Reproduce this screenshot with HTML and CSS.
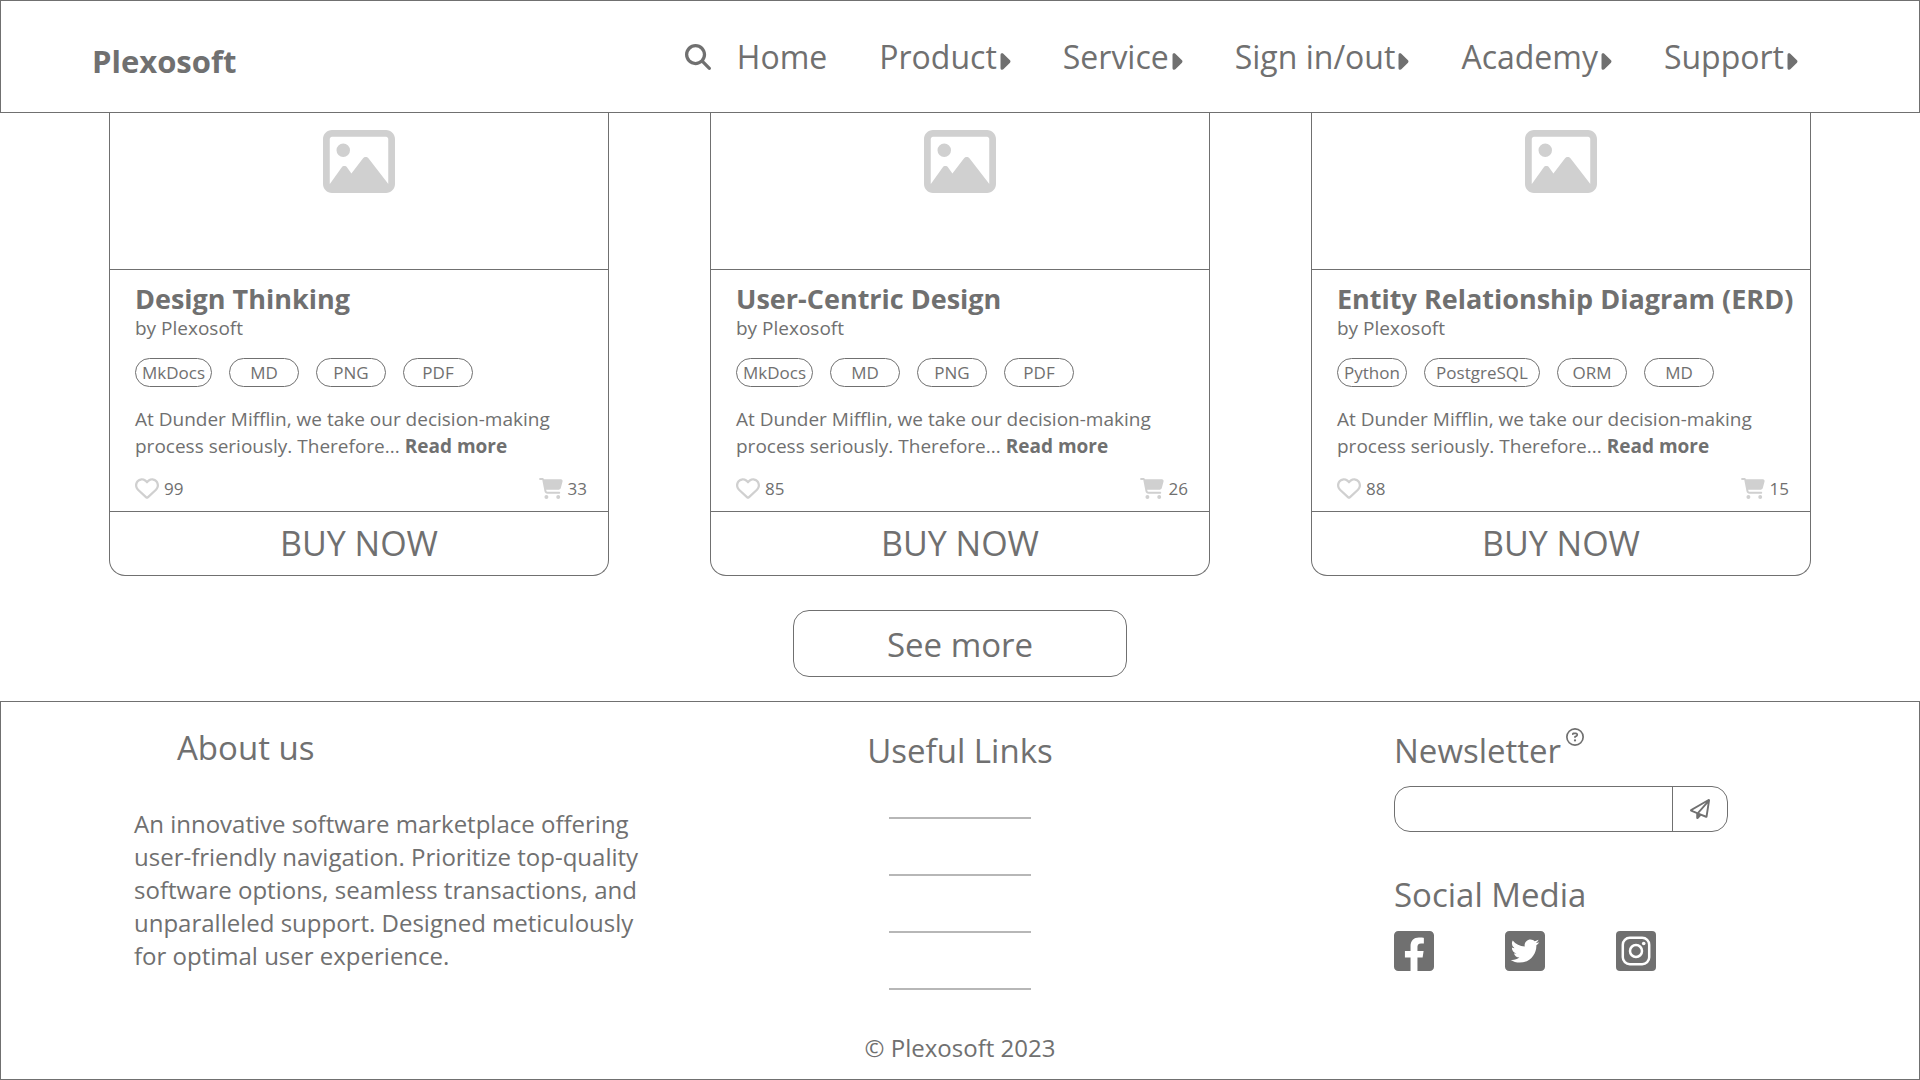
FILE: index.html
```html
<!DOCTYPE html>
<html lang="en">
<head>
<meta charset="utf-8">
<meta name="viewport" content="width=device-width, initial-scale=1">
<title>Plexosoft</title>
<link rel="stylesheet" href="styles.css">
</head>
<body>
<svg class="sprite" aria-hidden="true">
  <symbol id="image" viewBox="0 32 512 448"><path d="M448 80c8.800 0 16 7.200 16 16V415.800l-5-6.500-136-176c-4.500-5.900-11.600-9.300-19-9.300s-14.400 3.400-19 9.300L202 340.700l-30.500-42.700C167 291.700 159.800 288 152 288s-15 3.700-19.500 10.100l-80 112L48 416.300l0-.3V96c0-8.800 7.200-16 16-16H448zM64 32C28.700 32 0 60.700 0 96V416c0 35.300 28.700 64 64 64H448c35.300 0 64-28.700 64-64V96c0-35.300-28.700-64-64-64H64zm80 192a48 48 0 1 0 0-96 48 48 0 1 0 0 96z"/></symbol>
  <symbol id="heart" viewBox="0 36 512 448"><path d="M225.800 468.200l-2.500-2.300L48.100 303.200C17.400 274.700 0 234.700 0 192.800v-3.300c0-70.400 50-130.800 119.200-144C158.600 37.900 198.900 47 231 69.600c9 6.400 17.400 13.800 25 22.300c4.200-4.800 8.700-9.200 13.500-13.300c3.700-3.200 7.500-6.200 11.500-9C313.100 47 353.400 37.900 392.800 45.400C462 58.600 512 119.100 512 189.500v3.300c0 41.900-17.400 81.900-48.100 110.400L288.700 465.900l-2.500 2.300c-8.200 7.600-19 11.900-30.200 11.900s-22-4.200-30.200-11.900zM239.100 145c-.4-.3-.7-.7-1-1.100l-17.800-20c-23.100-25.900-58-37.700-92-31.200C81.600 101.500 48 142.100 48 189.500v3.300c0 28.500 11.900 55.800 32.800 75.200L256 430.700 431.200 268c20.900-19.400 32.800-46.700 32.800-75.200v-3.300c0-47.300-33.600-88-80.100-96.900c-34-6.500-69 5.400-92 31.200l-18 20.200c-.3 .4-.7 .7-1 1.100c-4.500 4.500-10.600 7-16.900 7s-12.400-2.500-16.900-7z"/></symbol>
  <symbol id="cart" viewBox="0 0 576 512"><path d="M0 24C0 10.700 10.700 0 24 0H69.500c22 0 41.500 12.800 50.600 32h411c26.300 0 45.500 25 38.600 50.400l-41 152.300c-8.500 31.400-37 53.300-69.500 53.300H170.700l5.400 28.500c2.200 11.300 12.100 19.500 23.600 19.500H488c13.300 0 24 10.700 24 24s-10.700 24-24 24H199.700c-34.600 0-64.300-24.600-70.700-58.500L77.400 54.500c-.7-3.800-4-6.500-7.900-6.500H24C10.700 48 0 37.300 0 24zM128 464a48 48 0 1 1 96 0 48 48 0 1 1 -96 0zm336-48a48 48 0 1 1 0 96 48 48 0 1 1 0-96z"/></symbol>
  <symbol id="search" viewBox="0 0 512 512"><path d="M416 208c0 45.900-14.900 88.300-40 122.700L502.600 457.400c12.500 12.500 12.500 32.800 0 45.300s-32.800 12.500-45.300 0L330.700 376c-34.400 25.200-76.800 40-122.700 40C93.100 416 0 322.900 0 208S93.100 0 208 0S416 93.100 416 208zM208 352a144 144 0 1 0 0-288 144 144 0 1 0 0 288z"/></symbol>
  <symbol id="caret" viewBox="64 92 192 328"><path d="M246.600 278.600c12.500-12.500 12.500-32.800 0-45.300l-128-128c-9.200-9.200-22.900-11.900-34.900-6.900s-19.800 16.600-19.800 29.600l0 256c0 12.900 7.800 24.600 19.800 29.600s25.700 2.200 34.900-6.900l128-128z"/></symbol>
  <symbol id="question" viewBox="0 0 512 512"><path d="M464 256A208 208 0 1 0 48 256a208 208 0 1 0 416 0zM0 256a256 256 0 1 1 512 0A256 256 0 1 1 0 256zm169.800-90.700c7.900-22.300 29.100-37.300 52.800-37.300h58.300c34.900 0 63.100 28.300 63.100 63.100c0 22.600-12.100 43.500-31.700 54.800L280 264.400c-.2 13-10.900 23.600-24 23.600c-13.300 0-24-10.700-24-24V250.500c0-8.600 4.600-16.500 12.100-20.800l44.300-25.400c4.700-2.700 7.600-7.700 7.600-13.100c0-8.400-6.800-15.100-15.100-15.100H222.600c-3.400 0-6.400 2.100-7.500 5.300l-.4 1.200c-4.400 12.500-18.200 19-30.600 14.600s-19-18.200-14.600-30.600l.4-1.200zM224 352a32 32 0 1 1 64 0 32 32 0 1 1 -64 0z"/></symbol>
  <symbol id="plane" viewBox="0 0 512 512"><path d="M16.100 260.200c-22.600 12.900-20.500 47.300 3.600 57.300L160 376V479.300c0 18.100 14.600 32.700 32.700 32.700c9.700 0 18.900-4.300 25.100-11.800l62-74.300 123.900 51.600c18.900 7.900 40.800-4.500 43.900-24.700l64-416c1.900-12.100-3.400-24.300-13.500-31.200s-23.300-7.500-34-1.400l-448 256zm52.100 25.500L409.700 90.600 190.100 336l1.200 1L68.200 285.700zM403.300 425.400L236.700 355.900 450.800 116.600 403.300 425.400z"/></symbol>
  <symbol id="facebook" viewBox="0 32 448 448"><path d="M400 32H48A48 48 0 0 0 0 80v352a48 48 0 0 0 48 48h137.250V327.690h-63V256h63v-54.640c0-62.150 37-96.480 93.670-96.480 27.140 0 55.520 4.840 55.520 4.840v61h-31.270c-30.810 0-40.420 19.120-40.420 38.730V256h68.780l-11 71.690h-57.780V480H400a48 48 0 0 0 48-48V80a48 48 0 0 0-48-48z"/></symbol>
  <symbol id="twitter" viewBox="0 32 448 448"><path d="M400 32H48C21.500 32 0 53.500 0 80v352c0 26.500 21.500 48 48 48h352c26.500 0 48-21.500 48-48V80c0-26.500-21.500-48-48-48zm-48.900 158.800c.2 2.800.2 5.700.2 8.500 0 86.700-66 186.600-186.600 186.600-37.200 0-71.700-10.800-100.700-29.400 5.300.6 10.400.8 15.800.8 30.700 0 58.900-10.400 81.400-28-28.800-.6-53-19.500-61.300-45.500 10.100 1.500 19.200 1.500 29.600-1.200-30-6.100-52.500-32.500-52.500-64.400v-.8c8.700 4.900 18.900 7.900 29.600 8.300a65.447 65.447 0 0 1-29.200-54.600c0-12.200 3.200-23.400 8.900-33.100 32.300 39.800 80.800 65.800 135.200 68.600-9.300-44.500 24-80.600 64-80.600 18.900 0 35.900 7.900 47.900 20.700 14.800-2.800 29-8.300 41.600-15.800-4.900 15.200-15.200 28-28.800 36.100 13.200-1.400 26-5.100 37.800-10.200-8.900 13.100-20.100 24.700-32.900 34z"/></symbol>
  <symbol id="instagram" viewBox="0 0 40 40"><rect width="40" height="40" rx="4"/><g fill="none" stroke="#fff" stroke-width="2.500"><rect x="6.800" y="6.800" width="26.400" height="26.400" rx="7"/><circle cx="20" cy="20" r="6"/></g><circle cx="27.700" cy="12.500" r="1.800" fill="#fff"/></symbol>
</svg>

<header class="header">
  <a class="logo" href="#">Plexosoft</a>
  <div class="header-tools">
    <button class="icon-button" type="button" aria-label="Search"><svg class="icon-search"><use href="#search"/></svg></button>
    <nav class="nav">
      <a href="#">Home</a>
      <a href="#">Product<svg class="icon-caret"><use href="#caret"/></svg></a>
      <a href="#">Service<svg class="icon-caret"><use href="#caret"/></svg></a>
      <a href="#">Sign in/out<svg class="icon-caret"><use href="#caret"/></svg></a>
      <a href="#">Academy<svg class="icon-caret"><use href="#caret"/></svg></a>
      <a href="#">Support<svg class="icon-caret"><use href="#caret"/></svg></a>
    </nav>
  </div>
</header>

<main class="main">
  <div class="cards">
    <article class="card">
      <div class="card-media"><svg class="icon-image"><use href="#image"/></svg></div>
      <div class="card-body">
        <h2 class="card-title">Design Thinking</h2>
        <p class="card-author">by Plexosoft</p>
        <ul class="tags"><li>MkDocs</li><li>MD</li><li>PNG</li><li>PDF</li></ul>
        <p class="card-text">At Dunder Mifflin, we take our decision-making process seriously. Therefore... <a href="#">Read more</a></p>
        <div class="stats">
          <span class="stat"><svg class="icon-stat"><use href="#heart"/></svg>99</span>
          <span class="stat"><svg class="icon-stat"><use href="#cart"/></svg>33</span>
        </div>
      </div>
      <button class="buy" type="button">BUY NOW</button>
    </article>
    <article class="card">
      <div class="card-media"><svg class="icon-image"><use href="#image"/></svg></div>
      <div class="card-body">
        <h2 class="card-title">User-Centric Design</h2>
        <p class="card-author">by Plexosoft</p>
        <ul class="tags"><li>MkDocs</li><li>MD</li><li>PNG</li><li>PDF</li></ul>
        <p class="card-text">At Dunder Mifflin, we take our decision-making process seriously. Therefore... <a href="#">Read more</a></p>
        <div class="stats">
          <span class="stat"><svg class="icon-stat"><use href="#heart"/></svg>85</span>
          <span class="stat"><svg class="icon-stat"><use href="#cart"/></svg>26</span>
        </div>
      </div>
      <button class="buy" type="button">BUY NOW</button>
    </article>
    <article class="card">
      <div class="card-media"><svg class="icon-image"><use href="#image"/></svg></div>
      <div class="card-body">
        <h2 class="card-title">Entity Relationship Diagram (ERD)</h2>
        <p class="card-author">by Plexosoft</p>
        <ul class="tags"><li>Python</li><li class="tag-wide">PostgreSQL</li><li>ORM</li><li>MD</li></ul>
        <p class="card-text">At Dunder Mifflin, we take our decision-making process seriously. Therefore... <a href="#">Read more</a></p>
        <div class="stats">
          <span class="stat"><svg class="icon-stat"><use href="#heart"/></svg>88</span>
          <span class="stat"><svg class="icon-stat"><use href="#cart"/></svg>15</span>
        </div>
      </div>
      <button class="buy" type="button">BUY NOW</button>
    </article>
  </div>
  <button class="see-more" type="button">See more</button>
</main>

<footer class="footer">
  <div class="footer-columns">
    <section class="about">
      <h2 class="footer-title">About us</h2>
      <p>An innovative software marketplace offering user-friendly navigation. Prioritize top-quality software options, seamless transactions, and unparalleled support. Designed meticulously for optimal user experience.</p>
    </section>
    <section class="links">
      <h2 class="footer-title">Useful Links</h2>
      <ul class="link-list">
        <li></li><li></li><li></li><li></li>
      </ul>
    </section>
    <section class="contact">
      <div class="newsletter-head">
        <h2 class="footer-title"><label for="email">Newsletter</label></h2>
        <button class="icon-button" type="button" aria-label="About the newsletter"><svg class="icon-question"><use href="#question"/></svg></button>
      </div>
      <form class="newsletter">
        <input id="email" type="email">
        <button type="button" aria-label="Subscribe"><svg class="icon-plane"><use href="#plane"/></svg></button>
      </form>
      <h2 class="footer-title social-title">Social Media</h2>
      <div class="social">
        <a href="#" aria-label="Facebook"><svg class="icon-social"><use href="#facebook"/></svg></a>
        <a href="#" aria-label="Twitter"><svg class="icon-social"><use href="#twitter"/></svg></a>
        <a href="#" aria-label="Instagram"><svg class="icon-social"><use href="#instagram"/></svg></a>
      </div>
    </section>
  </div>
  <p class="copyright">© Plexosoft 2023</p>
</footer>
</body>
</html>
```
FILE: styles.css
```css
:root {
  --ink: #707070;
  --soft: #d0d0d0;
  --rule: #b7b7b7;
}

* { box-sizing: border-box; }

body {
  margin: 0;
  min-height: 100vh;
  display: flex;
  flex-direction: column;
  background: #fff;
  color: var(--ink);
  font-family: "Open Sans", "Noto Sans", sans-serif;
}

h2, p, ul { margin: 0; padding: 0; }
ul { list-style: none; }
a { color: inherit; text-decoration: none; }
svg { display: block; fill: currentColor; }

button {
  padding: 0;
  border: 0;
  background: none;
  color: inherit;
  font: inherit;
}

.sprite { position: absolute; width: 0; height: 0; }

/* Header */
.header {
  display: flex;
  justify-content: space-between;
  align-items: center;
  padding: 34px 121px 33px 91px;
  border: 1px solid var(--ink);
}

.logo {
  padding-top: 9px;
  font-size: 31px;
  line-height: 35px;
  font-weight: 700;
}

.header-tools { display: flex; align-items: center; gap: 26px; }
.nav { display: flex; gap: 52px; font-size: 32px; line-height: 44px; }
.nav a { display: flex; align-items: center; gap: 3px; white-space: nowrap; }
.icon-search { width: 26px; height: 26px; }
.icon-caret { width: 11px; height: 17px; margin-top: 8px; }

/* Product cards */
.main {
  display: flex;
  flex-direction: column;
  align-items: center;
  gap: 34px;
  padding-bottom: 24px;
}

.cards {
  display: grid;
  grid-template-columns: repeat(3, minmax(0, 1fr));
  gap: 101px;
  width: 100%;
  padding: 0 109px;
}

.card {
  display: flex;
  flex-direction: column;
  border: 1px solid var(--ink);
  border-top: 0;
  border-radius: 0 0 16px 16px;
}

.card-media {
  display: flex;
  justify-content: center;
  padding: 17px 0 76px;
  border-bottom: 1px solid var(--ink);
  color: var(--soft);
}

.icon-image { width: 72px; height: 63px; }
.card-body { padding: 13px 21px 12px 25px; }

.card-title {
  font-size: 27px;
  line-height: 32px;
  font-weight: 700;
  white-space: nowrap;
}

.card-author { font-size: 19px; line-height: 26px; }

.tags { display: flex; gap: 17px; margin-top: 17px; }

.tags li {
  min-width: 70px;
  padding: 1px 6px 0;
  border: 1px solid var(--ink);
  border-radius: 15px;
  font-size: 17px;
  line-height: 26px;
  text-align: center;
}

.tags .tag-wide { min-width: 116px; }

.card-text { margin-top: 19px; font-size: 19px; line-height: 27px; }
.card-text a { font-weight: 700; }

.stats { display: flex; justify-content: space-between; margin-top: 18px; }
.stat { display: flex; align-items: center; gap: 5px; font-size: 17px; line-height: 21px; }
.icon-stat { width: 24px; height: 21px; color: var(--soft); }

.buy {
  border-top: 1px solid var(--ink);
  font-size: 34px;
  line-height: 63px;
}

.see-more {
  width: 334px;
  padding-top: 2px;
  border: 1px solid var(--ink);
  border-radius: 16px;
  font-size: 33px;
  line-height: 63px;
}

/* Footer */
.footer {
  flex: 1;
  display: flex;
  flex-direction: column;
  justify-content: space-between;
  gap: 40px;
  padding: 23px 0 15px;
  border: 1px solid var(--ink);
}

.footer-columns {
  display: grid;
  grid-template-columns: minmax(0, 1fr) 190px minmax(0, 1fr);
}

.footer-title { font-size: 33px; line-height: 46px; font-weight: 400; }

.about { padding-left: 133px; }
.about .footer-title { padding-left: 43px; }
.about p { max-width: 510px; margin-top: 36px; font-size: 24px; line-height: 33px; }

.links, .contact { padding-top: 3px; }
.links { text-align: center; }
.link-list { display: grid; gap: 55px; margin: 43px 24px 0; }
.link-list li { height: 2px; background: var(--rule); }

.contact { justify-self: end; width: 334px; margin-right: 191px; }
.newsletter-head { display: flex; align-items: flex-start; gap: 5px; }
.icon-question { width: 18px; height: 18px; }

.newsletter {
  display: flex;
  height: 46px;
  margin-top: 12px;
  border: 1px solid var(--ink);
  border-radius: 16px;
}

.newsletter input {
  flex: 1;
  min-width: 0;
  padding: 0 16px;
  border: 0;
  outline: 0;
  background: none;
  color: inherit;
  font: inherit;
}

.newsletter button {
  display: flex;
  align-items: center;
  justify-content: center;
  width: 55px;
  border-left: 1px solid var(--ink);
}

.icon-plane { width: 20px; height: 20px; }
.social-title { margin-top: 40px; }
.social { display: flex; gap: 71px; margin-top: 13px; }
.icon-social { width: 40px; height: 40px; }

.copyright { font-size: 24px; line-height: 32px; text-align: center; }
```
